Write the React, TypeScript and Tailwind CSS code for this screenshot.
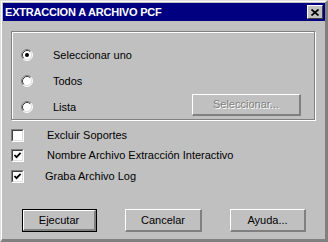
import React from 'react';

const font = { fontFamily: '"Liberation Sans", Arial, sans-serif' };

const Radio: React.FC<{ checked?: boolean }> = ({ checked }) => (
  <svg width="12" height="12" viewBox="0 0 12 12" className="shrink-0">
    <circle cx="6" cy="6" r="5" fill="#fff" />
    <path d="M2.11 9.89 A5.5 5.5 0 0 1 9.89 2.11" fill="none" stroke="#808080" strokeWidth="1" />
    <path d="M9.89 2.11 A5.5 5.5 0 0 1 2.11 9.89" fill="none" stroke="#fff" strokeWidth="1" />
    <path d="M2.82 9.18 A4.5 4.5 0 0 1 9.18 2.82" fill="none" stroke="#404040" strokeWidth="1" />
    <path d="M9.18 2.82 A4.5 4.5 0 0 1 2.82 9.18" fill="none" stroke="#dfdfdf" strokeWidth="1" />
    {checked && <circle cx="6" cy="6" r="2" fill="#000" />}
  </svg>
);

const Checkbox: React.FC<{ checked?: boolean }> = ({ checked }) => (
  <div className="w-[13px] h-[13px] shrink-0 border-t border-l border-[#808080] border-r-white border-b-white border-r border-b">
    <div className="w-full h-full bg-white border-t border-l border-[#404040] border-r border-b border-r-[#dfdfdf] border-b-[#dfdfdf] flex items-center justify-center">
      {checked && (
        <svg width="9" height="9" viewBox="0 0 9 9">
          <path d="M1.5 4 L3.5 6.2 L7.6 1.8" fill="none" stroke="#000" strokeWidth="1.8" />
        </svg>
      )}
    </div>
  </div>
);

const Button: React.FC<{ label: string; isDefault?: boolean; disabled?: boolean; className?: string }> = ({
  label,
  isDefault,
  disabled,
  className = ''
}) => {
  const text = disabled ? 'text-[#808080] [text-shadow:1px_1px_0_#fff]' : 'text-black';
  if (isDefault) {
    return (
      <div className={`border border-black ${className}`}>
        <div className={`w-full h-full border-t border-l border-white border-r-2 border-b-2 border-r-[#808080] border-b-[#808080] flex items-center justify-center text-[11px] ${text}`}>
          {label}
        </div>
      </div>
    );
  }
  return (
    <div className={`border-t border-l border-white border-r-2 border-b-2 border-r-[#808080] border-b-[#808080] flex items-center justify-center text-[11px] ${text} ${className}`}>
      {label}
    </div>
  );
};

export default function App() {
  return (
    <div style={font} className="w-[328px] h-[242px] bg-[#c0c0c0] border-t border-l border-[#dfdfdf] border-r border-b border-r-[#808080] border-b-[#808080]">
      <div className="w-full h-full border-t border-l border-white border-r-2 border-b-2 border-r-[#808080] border-b-[#808080] pt-px pl-px pr-0">
        {/* Title bar */}
        <div className="h-[18px] bg-[#000080] flex items-center justify-between pl-[2px] pr-[2px]">
          <span className="text-white font-bold text-[11px] leading-none tracking-[-0.2px]">EXTRACCION A ARCHIVO PCF</span>
          <div className="w-[16px] h-[14px] bg-[#c0c0c0] border-t border-l border-white border-r border-b border-r-[#404040] border-b-[#404040] flex items-center justify-center">
            <svg width="8" height="7" viewBox="0 0 8 7">
              <path d="M0.5 0.5 L7.5 6.5 M7.5 0.5 L0.5 6.5" stroke="#000" strokeWidth="1.7" />
            </svg>
          </div>
        </div>

        {/* Group box */}
        <div className="mt-[10px] ml-[8px] w-[304px] h-[89px] border border-[#808080] shadow-[inset_1px_1px_0_#fff,1px_1px_0_#fff] pt-[10px] pl-[9px]">
          <div className="h-[26px] flex items-center">
            <Radio checked />
            <span className="ml-[20px] text-[11px] text-black">Seleccionar uno</span>
          </div>
          <div className="h-[26px] flex items-center">
            <Radio />
            <span className="ml-[20px] text-[11px] text-black">Todos</span>
          </div>
          <div className="h-[26px] flex items-center">
            <Radio />
            <span className="ml-[20px] text-[11px] text-black">Lista</span>
            <Button label="Seleccionar..." disabled className="ml-auto mr-[13px] mb-[5px] w-[109px] h-[22px]" />
          </div>
        </div>

        {/* Checkboxes */}
        <div className="mt-[5px] ml-[8px]">
          <div className="h-[20px] flex items-center">
            <Checkbox />
            <span className="ml-[23px] text-[11px] text-black">Excluir Soportes</span>
          </div>
          <div className="h-[21px] flex items-center">
            <Checkbox checked />
            <span className="ml-[23px] text-[11px] text-black">Nombre Archivo Extracción Interactivo</span>
          </div>
          <div className="h-[20px] flex items-center">
            <Checkbox checked />
            <span className="ml-[21px] text-[11px] text-black">Graba Archivo Log</span>
          </div>
        </div>

        {/* Buttons */}
        <div className="mt-[23px] ml-[19px] flex gap-[28px]">
          <Button label="Ejecutar" isDefault className="w-[75px] h-[23px]" />
          <Button label="Cancelar" className="w-[77px] h-[23px]" />
          <Button label="Ayuda..." className="w-[76px] h-[23px]" />
        </div>
      </div>
    </div>
  );
}
